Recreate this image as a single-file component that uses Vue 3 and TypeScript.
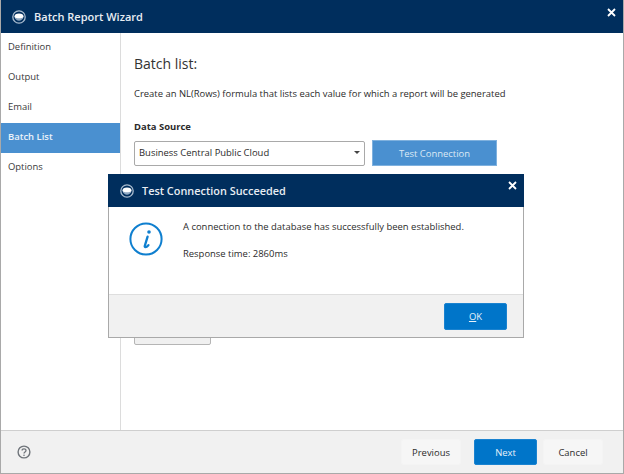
<script setup lang="ts">
const steps = ['Definition', 'Output', 'Email', 'Batch List', 'Options']
const activeStep = 'Batch List'
</script>

<template>
  <div class="wizard">
    <header class="titlebar">
      <svg class="logo" width="14" height="14" viewBox="0 0 14 14">
        <circle cx="7" cy="7" r="6.2" fill="none" stroke="#a9bccf" stroke-width="1.3" />
        <ellipse cx="7" cy="6.3" rx="4.5" ry="2.9" fill="#fff" />
        <path d="M2.7 7.2c1.4 1.5 7.2 1.5 8.6 0-.5 2.3-2.3 3.5-4.3 3.5S3.200 9.500 2.700 7.200z" fill="#8fa8c2" />
      </svg>
      <span class="title">Batch Report Wizard</span>
      <svg class="close" width="9" height="9" viewBox="0 0 9 9">
        <path d="M1 1l7 7M8 1L1 8" stroke="#fff" stroke-width="1.8" />
      </svg>
    </header>

    <div class="body">
      <nav class="sidebar">
        <div v-for="step in steps" :key="step" class="step" :class="{ active: step === activeStep }">
          {{ step }}
        </div>
      </nav>
      <main class="content">
        <h1>Batch list:</h1>
        <p class="desc">Create an NL(Rows) formula that lists each value for which a report will be generated</p>
        <label class="field-label">Data Source</label>
        <div class="source-row">
          <div class="select">
            <span>Business Central Public Cloud</span>
            <i class="caret"></i>
          </div>
          <button class="test-btn">Test Connection</button>
        </div>
        <button class="hidden-btn"></button>
      </main>
    </div>

    <footer class="footer">
      <svg class="help" width="14" height="14" viewBox="0 0 14 14">
        <circle cx="7" cy="7" r="5.9" fill="none" stroke="#6f747a" stroke-width="1.4" />
        <path d="M5.1 5.500c0-2.300 3.900-2.300 3.900 0 0 1.400-2 1.500-2 3" fill="none" stroke="#6f747a" stroke-width="1.300" />
        <circle cx="7" cy="10.200" r=".8" fill="#6f747a" />
      </svg>
      <div class="footer-btns">
        <button class="btn">Previous</button>
        <button class="btn primary next">Next</button>
        <button class="btn">Cancel</button>
      </div>
    </footer>

    <!-- dialogo encima del wizard -->
    <section class="dialog">
      <header class="dialog-head">
        <svg class="logo" width="14" height="14" viewBox="0 0 14 14">
          <circle cx="7" cy="7" r="6.2" fill="none" stroke="#a9bccf" stroke-width="1.3" />
          <ellipse cx="7" cy="6.3" rx="4.5" ry="2.9" fill="#fff" />
          <path d="M2.7 7.2c1.4 1.5 7.2 1.5 8.6 0-.5 2.3-2.3 3.5-4.3 3.5S3.200 9.500 2.700 7.200z" fill="#8fa8c2" />
        </svg>
        <span class="dialog-title">Test Connection Succeeded</span>
        <svg class="close dialog-close" width="9" height="9" viewBox="0 0 9 9">
          <path d="M1 1l7 7M8 1L1 8" stroke="#fff" stroke-width="1.8" />
        </svg>
      </header>
      <div class="dialog-body">
        <svg class="info" width="34" height="34" viewBox="0 0 34 34">
          <circle cx="17" cy="17" r="15.6" fill="none" stroke="#0f7fcf" stroke-width="2" />
          <path d="M18.600 14.600l-2.800 9.200c-.5 1.700 1.200 2 3.600-.6" fill="none" stroke="#0f7fcf" stroke-width="2.300" stroke-linecap="round" />
          <circle cx="20" cy="10" r="1.800" fill="#0f7fcf" />
        </svg>
        <div class="dialog-text">
          <p>A connection to the database has successfully been established.</p>
          <p>Response time: 2860ms</p>
        </div>
      </div>
      <footer class="dialog-foot">
        <button class="btn primary ok"><u>O</u>K</button>
      </footer>
    </section>
  </div>
</template>

<style>
html, body {
  margin: 0;
  background: #fff;
}
</style>

<style scoped>
.wizard {
  position: relative;
  display: flex;
  flex-direction: column;
  box-sizing: border-box;
  width: 624px;
  height: 474px;
  background: #fff;
  border: 1px solid #a9a9a9;
  border-top: 0;
  font-family: "Open Sans", "Noto Sans", sans-serif;
  font-size: 9.45px;
  color: #2b2b2b;
  overflow: hidden;
}

.titlebar {
  display: flex;
  align-items: center;
  flex: none;
  height: 33px;
  margin: 0 -1px;
  padding: 0 8px 0 12px;
  background: #002e5d;
  color: #fff;
}

.title {
  margin-left: 8px;
  font-size: 11px;
  font-weight: 600;
  color: #e8edf3;
}

.close {
  align-self: flex-start;
  margin: 8px 0 0 auto;
}

.dialog-close {
  margin-top: 7px;
}

.body {
  display: flex;
  flex: 1;
  min-height: 0;
}

.sidebar {
  flex: none;
  width: 119px;
  border-right: 1px solid #dcdcdc;
}

.step {
  height: 30px;
  padding-left: 7px;
  line-height: 28px;
  color: #3a3a3a;
}

.step.active {
  background: #4a90d0;
  color: #eaf2fa;
  font-weight: 600;
}

.content {
  flex: 1;
  padding: 20px 0 0 13px;
}

h1 {
  margin: 0;
  font-size: 14px;
  line-height: 21px;
  font-weight: 400;
  color: #333;
}

.desc {
  margin: 10px 0 0;
  line-height: 19px;
}

.field-label {
  display: block;
  margin-top: 14px;
  line-height: 19px;
  font-weight: 700;
}

.source-row {
  display: flex;
  align-items: center;
  gap: 7px;
  margin-top: 4px;
}

.select {
  display: flex;
  align-items: center;
  justify-content: space-between;
  box-sizing: border-box;
  width: 231px;
  height: 25px;
  padding: 0 4px 1px 4px;
  border: 1px solid #a9a9a9;
  border-radius: 2px;
  background: #fff;
}

.caret {
  width: 0;
  height: 0;
  border-left: 3px solid transparent;
  border-right: 3px solid transparent;
  border-top: 3px solid #444;
}

button {
  font: inherit;
  padding: 0;
}

.test-btn {
  width: 125px;
  height: 26px;
  border: 1px solid #7fb1de;
  background: #4a90d0;
  color: #dce9f5;
}

.hidden-btn {
  display: block;
  width: 77px;
  height: 26px;
  margin-top: 153px;
  border: 1px solid #b5b5b5;
  border-radius: 2px;
  background: #f0f0f0;
}

.footer {
  display: flex;
  align-items: center;
  justify-content: space-between;
  flex: none;
  box-sizing: border-box;
  height: 43px;
  padding: 0 20px 0 16px;
  border-top: 1px solid #cfcfcf;
  background: #f1f1f1;
}

.footer-btns {
  display: flex;
}

.btn {
  box-sizing: border-box;
  width: 60px;
  height: 26px;
  border: 1px solid #f4f4f4;
  border-radius: 2px;
  background: #f6f6f6;
  color: #2b2b2b;
}

.btn.primary {
  border-color: #1b83d0;
  background: #0075c9;
  color: #e8f2fa;
}

.next {
  width: 63px;
  margin: 0 6px 0 13px;
}

.dialog {
  position: absolute;
  top: 174px;
  left: 107px;
  display: flex;
  flex-direction: column;
  box-sizing: border-box;
  width: 416px;
  height: 164px;
  background: #fff;
  border: 1px solid #a9a9a9;
  border-top: 0;
}

.dialog-head {
  display: flex;
  align-items: center;
  flex: none;
  height: 33px;
  margin: 0 -1px;
  padding: 0 7px 0 12px;
  background: #002e5d;
  color: #fff;
}

.dialog-title {
  margin-left: 8px;
  font-size: 10.9px;
  font-weight: 600;
  color: #e8edf3;
}

.dialog-body {
  display: flex;
  flex: 1;
  padding: 15px 0 0 20px;
}

.info {
  flex: none;
}

.dialog-text {
  margin: -2px 0 0 20px;
  line-height: 14px;
}

.dialog-text p {
  margin: 0 0 13px;
}

.dialog-foot {
  display: flex;
  align-items: center;
  justify-content: flex-end;
  flex: none;
  box-sizing: border-box;
  height: 43px;
  padding-right: 16px;
  border-top: 1px solid #dedede;
  background: #f1f1f1;
}

.ok {
  width: 63px;
  height: 27px;
}
</style>
